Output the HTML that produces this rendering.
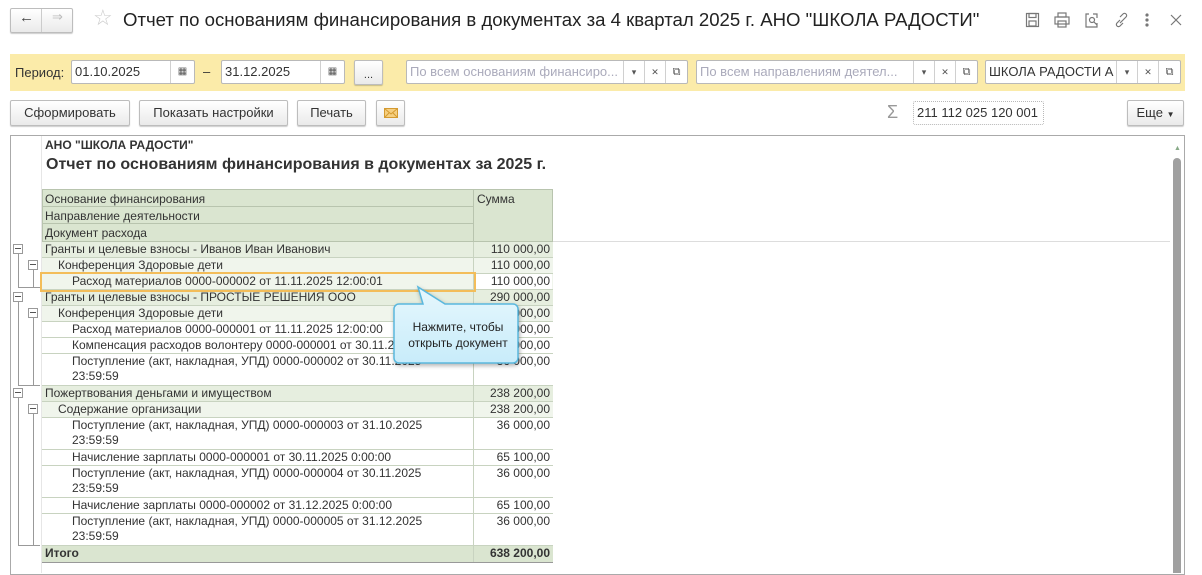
<!DOCTYPE html>
<html><head><meta charset="utf-8"><style>
*{box-sizing:border-box;margin:0;padding:0}
body{width:1202px;height:573px;overflow:hidden;background:#fff;font-family:"Liberation Sans",Arial,sans-serif;font-size:12px;color:#333;position:relative}
.a{position:absolute}
.btn{position:absolute;border:1px solid #bdbdbd;border-radius:2px;background:linear-gradient(#fff,#eaeaea);box-shadow:0 1px 1px rgba(0,0,0,.2);text-align:center;font-size:13px;color:#333;line-height:24px}
.fld{position:absolute;height:24px;border:1px solid #b9b9b9;border-radius:2px;background:#fff;font-size:13px;line-height:22px;padding-left:3px;white-space:nowrap;overflow:hidden}
.seg{position:absolute;top:0;height:22px;border-left:1px solid #d0d0d0;text-align:center;font-size:9px;color:#555;line-height:22px}
.ph{color:#aab}
.row{position:absolute;left:42px;width:511px;height:16px;border-bottom:1px solid #c8d3c0;font-size:12px;line-height:15px;white-space:nowrap}
.row .t{position:absolute;left:3px;top:0}
.row .s{position:absolute;left:431px;width:79px;top:0;text-align:right;padding-right:2px;border-left:1px solid #c8d3c0;height:100%}
.g1{background:#e6eedf}.g2{background:#f0f5ec}
.tb{position:absolute;width:10px;height:10px;border:1px solid #999;background:#fff}
.tb:after{content:"";position:absolute;left:1px;top:3px;width:6px;height:1px;background:#555}
.vl{position:absolute;width:1px;background:#999}
.hl{position:absolute;height:1px;background:#999}
</style></head><body>
<div class="btn" style="left:10px;top:8px;width:63px;height:25px"></div>
<div class="a" style="left:41px;top:9px;width:1px;height:23px;background:#ccc"></div>
<div class="a" style="left:19px;top:9px;font-size:15px;color:#444">&#8592;</div>
<div class="a" style="left:52px;top:9px;font-size:13px;color:#bbb">&#8658;</div>
<div class="a" style="left:93px;top:5px;font-size:22px;color:#ccc">&#9734;</div>
<div class="a" style="left:123px;top:9px;font-size:18.6px;color:#222">Отчет по основаниям финансирования в документах за 4 квартал 2025 г. АНО "ШКОЛА РАДОСТИ"</div>
<svg class="a" style="left:1025px;top:12px" width="170" height="18" fill="none" stroke="#777" stroke-width="1.2">
<rect x="1.5" y="1.5" width="12" height="13"/><rect x="4" y="1.5" width="7" height="4"/><rect x="4" y="9" width="7" height="5"/>
<rect x="33" y="1" width="8" height="4"/><rect x="30" y="5" width="14" height="7"/><rect x="33" y="9" width="8" height="6"/>
<path d="M64 2h-3v13h11v-4M68 2h4v4"/><circle cx="67" cy="8" r="2.5"/><path d="M69 10l3 3"/>
<path d="M95 8l-3 3a2 2 0 0 0 3 3l3-3M98 8l3-3a2 2 0 0 0-3-3l-3 3M95 11l4-4"/>
<circle cx="122" cy="3" r="1" fill="#777"/><circle cx="122" cy="8" r="1" fill="#777"/><circle cx="122" cy="13" r="1" fill="#777"/>
<path d="M146 3l10 10M156 3l-10 10"/>
</svg>
<div class="a" style="left:10px;top:54px;width:1175px;height:37px;background:#fbeba9"></div>
<div class="a" style="left:15px;top:65px;font-size:13px">Период:</div>
<div class="fld" style="left:71px;top:60px;width:124px">01.10.2025<div class="seg" style="left:98px;width:24px;font-size:10px">&#9638;</div></div>
<div class="a" style="left:203px;top:64px;font-size:13px">–</div>
<div class="fld" style="left:221px;top:60px;width:124px">31.12.2025<div class="seg" style="left:98px;width:24px;font-size:10px">&#9638;</div></div>
<div class="btn" style="left:354px;top:60px;width:29px;height:25px;line-height:28px;font-size:11px">...</div>
<div class="fld" style="left:406px;top:60px;width:282px"><span class="ph">По всем основаниям финансиро...</span><div class="seg" style="left:216px;width:21px;background:#fff">&#9662;</div><div class="seg" style="left:237px;width:21px">&#10005;</div><div class="seg" style="left:258px;width:22px;font-size:11px">&#10697;</div></div>
<div class="fld" style="left:696px;top:60px;width:282px"><span class="ph">По всем направлениям деятел...</span><div class="seg" style="left:216px;width:21px;background:#fff">&#9662;</div><div class="seg" style="left:237px;width:21px">&#10005;</div><div class="seg" style="left:258px;width:22px;font-size:11px">&#10697;</div></div>
<div class="fld" style="left:985px;top:60px;width:196px">ШКОЛА РАДОСТИ А<div class="seg" style="left:130px;width:21px;background:#fff">&#9662;</div><div class="seg" style="left:151px;width:21px">&#10005;</div><div class="seg" style="left:172px;width:22px;font-size:11px">&#10697;</div></div>
<div class="btn" style="left:10px;top:100px;width:120px;height:26px">Сформировать</div>
<div class="btn" style="left:139px;top:100px;width:149px;height:26px">Показать настройки</div>
<div class="btn" style="left:297px;top:100px;width:69px;height:26px">Печать</div>
<div class="btn" style="left:376px;top:100px;width:29px;height:26px"><svg style="position:absolute;left:7px;top:7px" width="14" height="11"><rect x="0.5" y="0.5" width="13" height="9" fill="#f6cf80" stroke="#d49a30"/><path d="M0.5 0.5L7 6L13.5 0.5M0.5 9.5L5 5M13.5 9.5L9 5" fill="none" stroke="#d49a30"/></svg></div>
<div class="a" style="left:887px;top:102px;font-size:18px;color:#999">&#931;</div>
<div class="fld" style="left:913px;top:101px;width:131px;border-style:dotted">211 112 025 120 001</div>
<div class="btn" style="left:1127px;top:100px;width:57px;height:26px">Еще <span style="font-size:8px">&#9660;</span></div>
<div class="a" style="left:10px;top:135px;width:1175px;height:440px;border:1px solid #aaa"></div>
<div class="a" style="left:41px;top:136px;width:1px;height:437px;background:#e6e6e6"></div>
<div class="a" style="left:1173px;top:158px;width:8px;height:415px;background:#a0a0a0;border-radius:4px 4px 0 0"></div>
<div class="a" style="left:1174px;top:145px;font-size:7px;color:#8a8">&#9650;</div>
<div class="a" style="left:45px;top:138px;font-size:12px;font-weight:bold;color:#333">АНО "ШКОЛА РАДОСТИ"</div>
<div class="a" style="left:46px;top:156px;font-size:16px;font-weight:bold;color:#333">Отчет по основаниям финансирования в документах за 2025 г.</div>
<div class="a" style="left:42px;top:189px;width:511px;height:53px;background:#dae5d0;border:1px solid #b8c4ae"></div>
<div class="a" style="left:42px;top:206px;width:431px;height:1px;background:#b8c4ae"></div>
<div class="a" style="left:42px;top:223px;width:431px;height:1px;background:#b8c4ae"></div>
<div class="a" style="left:473px;top:189px;width:1px;height:53px;background:#b8c4ae"></div>
<div class="a" style="left:45px;top:192px">Основание финансирования</div>
<div class="a" style="left:45px;top:209px">Направление деятельности</div>
<div class="a" style="left:45px;top:226px">Документ расхода</div>
<div class="a" style="left:477px;top:192px">Сумма</div>
<div class="a" style="left:553px;top:241px;width:617px;height:1px;background:#ddd"></div>
<div class="row g1" style="top:242px"><span class="t">Гранты и целевые взносы - Иванов Иван Иванович</span><span class="s">110 000,00</span></div>
<div class="row g2" style="top:258px"><span class="t" style="left:16px">Конференция Здоровые дети</span><span class="s">110 000,00</span></div>
<div class="row g2" style="top:274px"><span class="t" style="left:30px">Расход материалов 0000-000002 от 11.11.2025 12:00:01</span><span class="s" style="background:#fff">110 000,00</span></div>
<div class="row g1" style="top:290px"><span class="t">Гранты и целевые взносы - ПРОСТЫЕ РЕШЕНИЯ ООО</span><span class="s">290 000,00</span></div>
<div class="row g2" style="top:306px"><span class="t" style="left:16px">Конференция Здоровые дети</span><span class="s">290 000,00</span></div>
<div class="row" style="top:322px"><span class="t" style="left:30px">Расход материалов 0000-000001 от 11.11.2025 12:00:00</span><span class="s">110 000,00</span></div>
<div class="row" style="top:338px"><span class="t" style="left:30px">Компенсация расходов волонтеру 0000-000001 от 30.11.2025</span><span class="s">144 000,00</span></div>
<div class="row" style="top:354px;height:32px"><span class="t" style="left:30px">Поступление (акт, накладная, УПД) 0000-000002 от 30.11.2025<br>23:59:59</span><span class="s">36 000,00</span></div>
<div class="row g1" style="top:386px"><span class="t">Пожертвования деньгами и имуществом</span><span class="s">238 200,00</span></div>
<div class="row g2" style="top:402px"><span class="t" style="left:16px">Содержание организации</span><span class="s">238 200,00</span></div>
<div class="row" style="top:418px;height:32px"><span class="t" style="left:30px">Поступление (акт, накладная, УПД) 0000-000003 от 31.10.2025<br>23:59:59</span><span class="s">36 000,00</span></div>
<div class="row" style="top:450px"><span class="t" style="left:30px">Начисление зарплаты 0000-000001 от 30.11.2025 0:00:00</span><span class="s">65 100,00</span></div>
<div class="row" style="top:466px;height:32px"><span class="t" style="left:30px">Поступление (акт, накладная, УПД) 0000-000004 от 30.11.2025<br>23:59:59</span><span class="s">36 000,00</span></div>
<div class="row" style="top:498px"><span class="t" style="left:30px">Начисление зарплаты 0000-000002 от 31.12.2025 0:00:00</span><span class="s">65 100,00</span></div>
<div class="row" style="top:514px;height:32px"><span class="t" style="left:30px">Поступление (акт, накладная, УПД) 0000-000005 от 31.12.2025<br>23:59:59</span><span class="s">36 000,00</span></div>
<div class="row" style="top:546px;height:17px;background:#dae5d0;font-weight:bold;border-bottom:1px solid #999"><span class="t">Итого</span><span class="s">638 200,00</span></div>
<div class="vl" style="left:18px;top:253px;height:34px"></div><div class="hl" style="left:18px;top:287px;width:22px"></div>
<div class="vl" style="left:33px;top:269px;height:18px"></div>
<div class="vl" style="left:18px;top:301px;height:84px"></div><div class="hl" style="left:18px;top:385px;width:22px"></div>
<div class="vl" style="left:33px;top:317px;height:68px"></div>
<div class="vl" style="left:18px;top:397px;height:148px"></div><div class="hl" style="left:18px;top:545px;width:22px"></div>
<div class="vl" style="left:33px;top:413px;height:132px"></div>
<div class="tb" style="left:13px;top:244px"></div><div class="tb" style="left:28px;top:260px"></div>
<div class="tb" style="left:13px;top:292px"></div><div class="tb" style="left:28px;top:308px"></div>
<div class="tb" style="left:13px;top:388px"></div><div class="tb" style="left:28px;top:404px"></div>
<div class="a" style="left:40px;top:272px;width:436px;height:20px;border:2px solid #f3bd5a"></div>
<svg class="a" style="left:390px;top:284px" width="140" height="86">
<defs><linearGradient id="g" x1="0" y1="0" x2="0" y2="1"><stop offset="0" stop-color="#e6f7fd"/><stop offset="1" stop-color="#c8ecfa"/></linearGradient></defs>
<path d="M9 20H33L28 3L55 20H123a5 5 0 0 1 5 5V74a5 5 0 0 1-5 5H9a5 5 0 0 1-5-5V25a5 5 0 0 1 5-5Z" fill="url(#g)" stroke="#5ab8de" stroke-width="1.5" style="filter:drop-shadow(1px 2px 2px rgba(0,0,0,.3))"/>
</svg>
<div class="a" style="left:394px;top:319px;width:128px;text-align:center;font-size:12px;line-height:16px;color:#222">Нажмите, чтобы<br>открыть документ</div>
</body></html>
